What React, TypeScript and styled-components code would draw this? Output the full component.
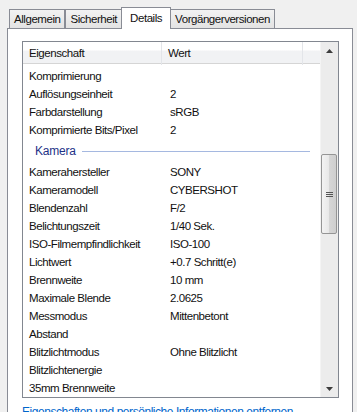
import styled, { createGlobalStyle } from "styled-components"

interface RowT {
  name: string,
  value?: string,
}

const GlobalStyle = createGlobalStyle`
  html, body {
    margin: 0;
    padding: 0;
    background: #f0f0f0;
    font-family: "Liberation Sans", Arial, sans-serif;
    font-size: 11.5px;
    letter-spacing: -0.45px;
    color: #111;
    overflow: hidden;
  }
`

const Window = styled.div`
  width: 357px;
  height: 412px;
  padding-top: 7px;
  box-sizing: border-box;
  overflow: hidden;
`

const TabStrip = styled.div`
  display: flex;
  align-items: flex-end;
  padding-left: 9px;
  height: 22px;
  position: relative;
  z-index: 1;
`

const Tab = styled.div<{ $active?: boolean }>`
  box-sizing: border-box;
  height: ${(p) => (p.$active ? "22px" : "20px")};
  margin-left: ${(p) => (p.$active ? "-1px" : "0")};
  margin-right: ${(p) => (p.$active ? "-1px" : "0")};
  padding: ${(p) => (p.$active ? "4px 8px 0" : "3px 4px 0")};
  border: 1px solid #898c95;
  border-bottom: ${(p) => (p.$active ? "none" : "1px solid #898c95")};
  background: ${(p) => (p.$active ? "#fff" : "linear-gradient(#f2f2f2, #e3e3e3)")};
  & + & {
    border-left: ${(p) => (p.$active ? "1px solid #898c95" : "none")};
  }
  white-space: nowrap;
`

const Panel = styled.div`
  margin-left: 7px;
  margin-top: -1px;
  width: 346px;
  height: 400px;
  box-sizing: border-box;
  border: 1px solid #898c95;
  background: #fff;
  padding: 12px 14px 0 14px;
`

const ListBox = styled.div`
  width: 317px;
  height: 357px;
  box-sizing: border-box;
  border: 1px solid #828790;
  display: flex;
  overflow: hidden;
`

const ListMain = styled.div`
  flex: 1;
  display: flex;
  flex-direction: column;
  overflow: hidden;
`

const Header = styled.div`
  display: grid;
  grid-template-columns: 139px 141px 1fr;
  height: 22px;
  box-sizing: border-box;
  border-bottom: 1px solid #d5d5d5;
  background: linear-gradient(#fff 0%, #fff 40%, #f1f2f4 41%, #f1f2f4 100%);
`

const HeadCell = styled.div`
  padding-left: 6px;
  line-height: 23px;
  border-right: 1px solid #e3e5e9;
  &:last-child {
    border-right: none;
  }
`

const Rows = styled.div`
  padding-top: 3px;
`

const Row = styled.div`
  display: grid;
  grid-template-columns: 141px 1fr;
  height: 18px;
  line-height: 18px;
  & > span {
    padding-left: 6px;
    white-space: nowrap;
  }
`

const Group = styled.div`
  display: flex;
  align-items: center;
  height: 24px;
  padding: 0 10px 0 12px;
  box-sizing: border-box;
  color: #1e3287;
  font-size: 12px;
  letter-spacing: -0.2px;
  gap: 6px;
  &::after {
    content: "";
    flex: 1;
    height: 1px;
    background: #a5b8e0;
    margin-top: 1px;
  }
`

const ScrollBar = styled.div`
  width: 17px;
  display: flex;
  flex-direction: column;
  background: #ececec;
  border-left: 1px solid #f4f4f4;
`

const ArrowBtn = styled.div`
  height: 17px;
  display: flex;
  align-items: center;
  justify-content: center;
`

const Track = styled.div`
  flex: 1;
  display: flex;
  flex-direction: column;
  padding-top: 95px;
`

const Thumb = styled.div`
  margin: 0 1px 0 0;
  height: 80px;
  box-sizing: border-box;
  border: 1px solid #959595;
  border-radius: 2px;
  background: linear-gradient(90deg, #f3f3f3 0%, #e8e8e8 50%, #d6d6d6 51%, #cfcfcf 100%);
  display: flex;
  align-items: center;
  justify-content: center;
`

const LinkText = styled.div`
  margin-top: 7px;
  color: #0066cc;
  font-size: 12px;
  white-space: nowrap;
`

const generalRows: RowT[] = [
  { name: "Komprimierung" },
  { name: "Auflösungseinheit", value: "2" },
  { name: "Farbdarstellung", value: "sRGB" },
  { name: "Komprimierte Bits/Pixel", value: "2" },
]

const cameraRows: RowT[] = [
  { name: "Kamerahersteller", value: "SONY" },
  { name: "Kameramodell", value: "CYBERSHOT" },
  { name: "Blendenzahl", value: "F/2" },
  { name: "Belichtungszeit", value: "1/40 Sek." },
  { name: "ISO-Filmempfindlichkeit", value: "ISO-100" },
  { name: "Lichtwert", value: "+0.7 Schritt(e)" },
  { name: "Brennweite", value: "10 mm" },
  { name: "Maximale Blende", value: "2.0625" },
  { name: "Messmodus", value: "Mittenbetont" },
  { name: "Abstand" },
  { name: "Blitzlichtmodus", value: "Ohne Blitzlicht" },
  { name: "Blitzlichtenergie" },
  { name: "35mm Brennweite" },
]

function App() {
  return (
    <Window>
      <GlobalStyle />
      <TabStrip>
        <Tab>Allgemein</Tab>
        <Tab>Sicherheit</Tab>
        <Tab $active>Details</Tab>
        <Tab>Vorgängerversionen</Tab>
      </TabStrip>
      <Panel>
        <ListBox>
          <ListMain>
            <Header>
              <HeadCell>Eigenschaft</HeadCell>
              <HeadCell>Wert</HeadCell>
              <HeadCell />
            </Header>
            <Rows>
              {generalRows.map((r) => (
                <Row key={r.name}>
                  <span>{r.name}</span>
                  <span>{r.value}</span>
                </Row>
              ))}
              <Group>Kamera</Group>
              {cameraRows.map((r) => (
                <Row key={r.name}>
                  <span>{r.name}</span>
                  <span>{r.value}</span>
                </Row>
              ))}
            </Rows>
          </ListMain>
          <ScrollBar>
            <ArrowBtn>
              <svg width="7" height="4" viewBox="0 0 7 4">
                <path d="M0 4 L3.5 0 L7 4 Z" fill="#3c3c3c" />
              </svg>
            </ArrowBtn>
            <Track>
              <Thumb>
                <svg width="7" height="7" viewBox="0 0 7 7">
                  <path d="M0 1.5 H7 M0 3.5 H7 M0 5.5 H7" stroke="#555" strokeWidth="1" />
                </svg>
              </Thumb>
            </Track>
            <ArrowBtn>
              <svg width="7" height="4" viewBox="0 0 7 4">
                <path d="M0 0 L7 0 L3.5 4 Z" fill="#3c3c3c" />
              </svg>
            </ArrowBtn>
          </ScrollBar>
        </ListBox>
        <LinkText>Eigenschaften und persönliche Informationen entfernen</LinkText>
      </Panel>
    </Window>
  )
}

export default App
